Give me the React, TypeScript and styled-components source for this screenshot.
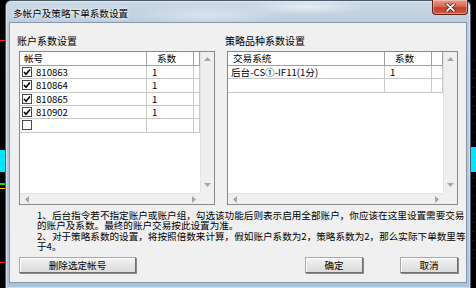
import React from 'react'
import styled, { createGlobalStyle } from 'styled-components'

const GlobalStyle = createGlobalStyle`
  html, body {
    margin: 0;
    padding: 0;
    background: #000;
    overflow: hidden;
  }
  body {
    font-family: "Noto Sans CJK SC", "Noto Sans", sans-serif;
  }
`

// 背后的行情软件画面（黑底 + 几条彩色线）
const Desktop = styled.div`
  width: 476px;
  height: 288px;
  background:
    linear-gradient(#00e5ff, #00e5ff) 0 150px / 5px 22px no-repeat,
    linear-gradient(#00e5ff, #00e5ff) 471px 147px / 5px 25px no-repeat,
    linear-gradient(#ff2020, #ff2020) 0 40px / 5px 1px no-repeat,
    linear-gradient(#ffd800, #ffd800) 0 188px / 5px 1px no-repeat,
    linear-gradient(#20d020, #20d020) 0 183px / 5px 2px no-repeat,
    linear-gradient(#ff2020, #ff2020) 0 262px / 5px 1px no-repeat,
    repeating-linear-gradient(180deg, #c01818 0 1px, transparent 1px 9px) 473px 60px / 1px 200px no-repeat,
    #000;
  display: flex;
  padding-left: 5px;
  box-sizing: border-box;
`

// 窗口外框 (Aero)
const Window = styled.div`
  width: 466px;
  height: 288px;
  box-sizing: border-box;
  border: 1px solid #4a5868;
  border-bottom: none;
  border-radius: 6px 6px 0 0;
  background:
    radial-gradient(ellipse 60px 8px at 300px 6px, rgba(255, 255, 255, 0.55), transparent),
    radial-gradient(ellipse 80px 10px at 200px 14px, rgba(240, 245, 250, 0.5), transparent),
    linear-gradient(180deg, #cbd8e5 0%, #bccdde 8%, #adc2d8 100%);
  box-shadow: inset 0 0 0 1px rgba(255, 255, 255, 0.45);
  display: flex;
  flex-direction: column;
  padding: 0 3px 5px 3px;
`

const TitleBar = styled.div`
  height: 21px;
  display: flex;
  align-items: flex-start;
  justify-content: space-between;
`

const Title = styled.div`
  font-size: 9.6px;
  line-height: 10px;
  color: #000;
  margin: 7px 0 0 4px;
  text-shadow: 0 0 5px #fff, 0 0 3px #fff;
  white-space: nowrap;
`

const CloseButton = styled.div`
  width: 36px;
  height: 15px;
  margin-top: -1px;
  margin-right: -1px;
  box-sizing: border-box;
  border: 1px solid #5b2118;
  border-top: none;
  border-radius: 0 0 4px 4px;
  background: linear-gradient(180deg, #e89a8a 0%, #d56b58 45%, #c2402d 55%, #cf5a3e 100%);
  box-shadow: inset 0 0 0 1px rgba(255, 255, 255, 0.35);
  display: flex;
  align-items: center;
  justify-content: center;
`

const Client = styled.div`
  flex: 1;
  background: #f0f0f0;
  border: 1px solid #8496aa;
  display: flex;
  flex-direction: column;
  padding: 12px 8px 8px 9px;
`

const Panels = styled.div`
  display: flex;
  gap: 12px;
`

const Panel = styled.div<{ $w: number }>`
  width: ${p => p.$w}px;
  display: flex;
  flex-direction: column;
`

const PanelLabel = styled.div`
  font-size: 10px;
  line-height: 12px;
  height: 12px;
  margin: 0 0 4px -2px;
  color: #000;
  white-space: nowrap;
`

// 列表控件
const ListBox = styled.div`
  height: 154px;
  box-sizing: border-box;
  border: 1px solid #828790;
  background: #fff;
  display: grid;
  grid-template-columns: 1fr 14px;
  grid-template-rows: 1fr 11px;
`

const TableArea = styled.div`
  overflow: hidden;
`

const HeaderRow = styled.div<{ $cols: string }>`
  display: grid;
  grid-template-columns: ${p => p.$cols};
  height: 13px;
  border-bottom: 1px solid #a0a0a0;
`

const HeaderCell = styled.div<{ $pad: number }>`
  font-size: 9.6px;
  line-height: 13px;
  padding-left: ${p => p.$pad}px;
  border-right: 1px solid #a0a0a0;
  white-space: nowrap;
  color: #000;
`

const Row = styled.div<{ $cols: string }>`
  display: grid;
  grid-template-columns: ${p => p.$cols};
  height: 13.33px;
  box-sizing: border-box;
  border-bottom: 1px solid #c8c8c8;
`

const Cell = styled.div<{ $pad: number }>`
  font-size: 9.6px;
  line-height: 12px;
  padding-left: ${p => p.$pad}px;
  border-right: 1px solid #c8c8c8;
  display: flex;
  align-items: center;
  gap: 4px;
  white-space: nowrap;
  color: #000;
`

const Check = styled.span`
  width: 10px;
  height: 10px;
  box-sizing: border-box;
  border: 1px solid #4a4a4a;
  background: #fff;
  display: inline-flex;
  align-items: center;
  justify-content: center;
  flex-shrink: 0;
`

const VScroll = styled.div`
  background: #efefef;
  border-left: 1px solid #e4e4e4;
  display: flex;
  flex-direction: column;
  justify-content: space-between;
  align-items: center;
  padding: 5px 0 6px;
`

const HScroll = styled.div`
  background: #efefef;
  border-top: 1px solid #e4e4e4;
  display: flex;
  justify-content: space-between;
  align-items: center;
  padding: 0 4px 0 5px;
`

const Corner = styled.div`
  background: #f0f0f0;
`

const Notes = styled.div`
  margin-top: 5px;
  padding-left: 18px;
  font-size: 9.6px;
  line-height: 10.25px;
  color: #000;
`

const NoteLine = styled.div`
  white-space: nowrap;
  height: 10.25px;
`

const ButtonRow = styled.div`
  margin-top: 6px;
  display: flex;
  gap: 37px;
`

const Button = styled.button<{ $w: number; $push?: boolean }>`
  width: ${p => p.$w}px;
  height: 16px;
  margin-left: ${p => (p.$push ? 'auto' : '0')};
  box-sizing: border-box;
  padding: 0;
  font-family: "Noto Sans CJK SC", "Noto Sans", sans-serif;
  font-size: 9.6px;
  line-height: 14px;
  color: #000;
  background: linear-gradient(180deg, #f4f4f4 0%, #e6e6e6 50%, #dcdcdc 100%);
  border: 1px solid #707070;
  border-top-color: #a8a8a8;
  border-left-color: #a8a8a8;
  box-shadow: inset 1px 1px 0 #fff, 1px 1px 0 #8a8a8a;
`

const Arrow = ({ dir }: { dir: 'up' | 'down' | 'left' | 'right' }) => {
  const pts = {
    up: '0,4 3.5,0 7,4',
    down: '0,0 3.5,4 7,0',
    left: '4,0 0,3.5 4,7',
    right: '0,0 4,3.5 0,7',
  }[dir]
  const vertical = dir === 'up' || dir === 'down'
  return (
    <svg width={vertical ? 7 : 4} height={vertical ? 4 : 7} viewBox={vertical ? '0 0 7 4' : '0 0 4 7'}>
      <polygon points={pts} fill="#a6a6a6" />
    </svg>
  )
}

type Item = { name: string; value: string; checked?: boolean }

const ListView = ({
  cols,
  heads,
  items,
  rows,
  withCheck,
  namePad,
}: {
  cols: string
  heads: [string, string]
  items: Item[]
  rows: number
  withCheck?: boolean
  namePad: number
}) => {
  const filled: (Item | null)[] = [...items]
  while (filled.length < rows) filled.push(null)
  return (
    <ListBox>
      <TableArea>
        <HeaderRow $cols={cols}>
          <HeaderCell $pad={namePad + 2}>{heads[0]}</HeaderCell>
          <HeaderCell $pad={10}>{heads[1]}</HeaderCell>
          <HeaderCell $pad={0} />
        </HeaderRow>
        {filled.map((it, i) => (
          <Row key={i} $cols={cols}>
            <Cell $pad={namePad}>
              {withCheck && (
                <Check>
                  {it?.checked && (
                    <svg width="8" height="8" viewBox="0 0 8 8">
                      <path d="M1 4 L3 6.2 L7 1.5" stroke="#000" strokeWidth="1.6" fill="none" />
                    </svg>
                  )}
                </Check>
              )}
              {it?.name}
            </Cell>
            <Cell $pad={5}>{it?.value}</Cell>
            <Cell $pad={0} />
          </Row>
        ))}
      </TableArea>
      <VScroll>
        <Arrow dir="up" />
        <Arrow dir="down" />
      </VScroll>
      <HScroll>
        <Arrow dir="left" />
        <Arrow dir="right" />
      </HScroll>
      <Corner />
    </ListBox>
  )
}

const accounts: Item[] = [
  { name: '810863', value: '1', checked: true },
  { name: '810864', value: '1', checked: true },
  { name: '810865', value: '1', checked: true },
  { name: '810902', value: '1', checked: true },
  { name: '', value: '', checked: false },
]

const strategies: Item[] = [{ name: '后台-CS①-IF11(1分)', value: '1' }]

export default function App() {
  return (
    <>
      <GlobalStyle />
      <Desktop>
        <Window>
          <TitleBar>
            <Title>多帐户及策略下单系数设置</Title>
            <CloseButton>
              <svg width="11" height="9" viewBox="0 0 11 9">
                <path d="M2 1.2 L9 7.8 M9 1.2 L2 7.8" stroke="#4a1a12" strokeWidth="3.2" strokeLinecap="round" />
                <path d="M2 1.2 L9 7.8 M9 1.2 L2 7.8" stroke="#fff" strokeWidth="1.8" strokeLinecap="round" />
              </svg>
            </CloseButton>
          </TitleBar>
          <Client>
            <Panels>
              <Panel $w={196}>
                <PanelLabel>账户系数设置</PanelLabel>
                <ListView
                  cols="127px 47px 1fr"
                  heads={['帐号', '系数']}
                  items={accounts}
                  rows={5}
                  withCheck
                  namePad={2}
                />
              </Panel>
              <Panel $w={231}>
                <PanelLabel>策略品种系数设置</PanelLabel>
                <ListView
                  cols="157px 47px 1fr"
                  heads={['交易系统', '系数']}
                  items={strategies}
                  rows={2}
                  namePad={3}
                />
              </Panel>
            </Panels>
            <Notes>
              <NoteLine>1、后台指令若不指定账户或账户组，勾选该功能后则表示启用全部账户，你应该在这里设置需要交易</NoteLine>
              <NoteLine>的账户及系数。最终的账户交易按此设置为准。</NoteLine>
              <NoteLine>2、对于策略系数的设置，将按照倍数来计算，假如账户系数为2，策略系数为2，那么实际下单数里等</NoteLine>
              <NoteLine>于4。</NoteLine>
            </Notes>
            <ButtonRow>
              <Button $w={117}>删除选定帐号</Button>
              <Button $w={58} $push>确定</Button>
              <Button $w={58}>取消</Button>
            </ButtonRow>
          </Client>
        </Window>
      </Desktop>
    </>
  )
}
